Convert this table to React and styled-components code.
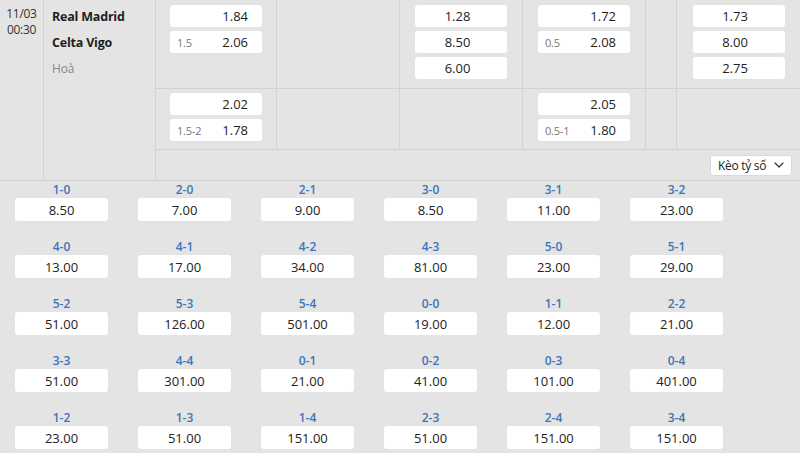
import React from 'react';
import styled, { createGlobalStyle } from 'styled-components';

const Global = createGlobalStyle`
    html, body {
        margin: 0;
        padding: 0;
        background: #e4e4e4;
    }

    body {
        font-family: "Open Sans", "Noto Sans", sans-serif;
        color: #333;
    }
`;

const Page = styled.div`
    width: 800px;
    height: 453px;
    overflow: hidden;
    background: #e4e4e4;
`;

const Match = styled.div`
    display: grid;
    grid-template-columns: 44px 112px 1fr;
    border-bottom: 1px solid #d2d2d2;
`;

const DateCell = styled.div`
    padding-top: 6px;
    border-right: 1px solid #d2d2d2;

    display: flex;
    flex-direction: column;
    align-items: center;

    font-size: 12px;
    line-height: 16px;
    letter-spacing: -0.3px;
    color: #333;
`;

const TeamCell = styled.div`
    padding: 5px 0 0 8px;
    border-right: 1px solid #d2d2d2;

    display: flex;
    flex-direction: column;
    gap: 4px;
`;

const Team = styled.div`
    height: 22px;

    display: flex;
    align-items: center;

    font-size: 12.5px;
    font-weight: 700;
    letter-spacing: -0.2px;
    color: ${props => props.muted ? '#888' : '#1e1e1e'};
    ${props => props.muted && 'font-weight: 400; font-size: 12px;'}
`;

const Markets = styled.div`
    display: flex;
    flex-direction: column;
`;

const OddsRow = styled.div`
    height: ${props => props.h}px;

    display: grid;
    grid-template-columns: 121px 123px 123px 123px 31px 1fr;

    border-bottom: 1px solid #d2d2d2;
`;

const Cell = styled.div`
    padding-top: ${props => props.top}px;

    display: flex;
    flex-direction: column;
    align-items: center;
    gap: 4px;

    &:not(:last-child) {
        border-right: 1px solid #d2d2d2;
    }
`;

const OddBox = styled.div`
    box-sizing: border-box;
    width: 92px;
    height: 22px;
    padding: 0 14px 0 7px;

    display: flex;
    align-items: center;
    justify-content: ${props => props.center ? 'center' : 'space-between'};

    background: #fff;
    border-radius: 3px;

    font-size: 13px;
    color: #222;
`;

const Line = styled.span`
    font-size: 11px;
    color: #777;
    letter-spacing: -0.2px;
`;

const Value = styled.span`
    margin-left: auto;
`;

const SelectRow = styled.div`
    height: 30px;
    padding-right: 8px;

    display: flex;
    align-items: center;
    justify-content: flex-end;
`;

const Select = styled.div`
    box-sizing: border-box;
    width: 82px;
    height: 21px;
    padding: 0 6px 0 7px;

    display: flex;
    align-items: center;
    justify-content: space-between;

    background: #fff;
    border: 1px solid #dadada;
    border-radius: 3px;

    font-size: 12px;
    letter-spacing: -0.3px;
    color: #222;

    & svg {
        width: 12px;
        height: 12px;
    }
`;

const Scores = styled.div`
    padding: 1px 0 0 15px;

    display: grid;
    grid-template-columns: repeat(6, 93px);
    column-gap: 30px;
    row-gap: 18px;
`;

const Score = styled.div`
    display: flex;
    flex-direction: column;
    align-items: center;
`;

const ScoreLabel = styled.div`
    height: 16px;

    font-size: 12px;
    font-weight: 600;
    line-height: 16px;
    color: #3d74bb;
`;

const ScoreBox = styled.div`
    width: 93px;
    height: 23px;

    display: flex;
    align-items: center;
    justify-content: center;

    background: #fff;
    border-radius: 3px;

    font-size: 13px;
    color: #222;
`;

const scores = [
    ['1-0', '8.50'], ['2-0', '7.00'], ['2-1', '9.00'], ['3-0', '8.50'], ['3-1', '11.00'], ['3-2', '23.00'],
    ['4-0', '13.00'], ['4-1', '17.00'], ['4-2', '34.00'], ['4-3', '81.00'], ['5-0', '23.00'], ['5-1', '29.00'],
    ['5-2', '51.00'], ['5-3', '126.00'], ['5-4', '501.00'], ['0-0', '19.00'], ['1-1', '12.00'], ['2-2', '21.00'],
    ['3-3', '51.00'], ['4-4', '301.00'], ['0-1', '21.00'], ['0-2', '41.00'], ['0-3', '101.00'], ['0-4', '401.00'],
    ['1-2', '23.00'], ['1-3', '51.00'], ['1-4', '151.00'], ['2-3', '51.00'], ['2-4', '151.00'], ['3-4', '151.00'],
];

const Chevron = () => (
    <svg viewBox="0 0 12 12" fill="none" stroke="#333" strokeWidth="1.2" strokeLinecap="round" strokeLinejoin="round">
        <path d="M2 4l4 4 4-4" />
    </svg>
);

const Odd = ({ line, value }) => (
    <OddBox>
        {line && <Line>{line}</Line>}
        <Value>{value}</Value>
    </OddBox>
);

const App = () => (
    <Page>
        <Global />
        <Match>
            <DateCell>
                <span>11/03</span>
                <span>00:30</span>
            </DateCell>
            <TeamCell>
                <Team>Real Madrid</Team>
                <Team>Celta Vigo</Team>
                <Team muted>Hoà</Team>
            </TeamCell>
            <Markets>
                <OddsRow h={88}>
                    <Cell top={5}>
                        <Odd value="1.84" />
                        <Odd line="1.5" value="2.06" />
                    </Cell>
                    <Cell top={5} />
                    <Cell top={5}>
                        <OddBox center>1.28</OddBox>
                        <OddBox center>8.50</OddBox>
                        <OddBox center>6.00</OddBox>
                    </Cell>
                    <Cell top={5}>
                        <Odd value="1.72" />
                        <Odd line="0.5" value="2.08" />
                    </Cell>
                    <Cell top={5} />
                    <Cell top={5}>
                        <OddBox center>1.73</OddBox>
                        <OddBox center>8.00</OddBox>
                        <OddBox center>2.75</OddBox>
                    </Cell>
                </OddsRow>
                <OddsRow h={60}>
                    <Cell top={4}>
                        <Odd value="2.02" />
                        <Odd line="1.5-2" value="1.78" />
                    </Cell>
                    <Cell top={4} />
                    <Cell top={4} />
                    <Cell top={4}>
                        <Odd value="2.05" />
                        <Odd line="0.5-1" value="1.80" />
                    </Cell>
                    <Cell top={4} />
                    <Cell top={4} />
                </OddsRow>
                <SelectRow>
                    <Select>
                        Kèo tỷ số
                        <Chevron />
                    </Select>
                </SelectRow>
            </Markets>
        </Match>
        <Scores>
            {scores.map(([label, odd]) => (
                <Score key={label}>
                    <ScoreLabel>{label}</ScoreLabel>
                    <ScoreBox>{odd}</ScoreBox>
                </Score>
            ))}
        </Scores>
    </Page>
);

export default App;
